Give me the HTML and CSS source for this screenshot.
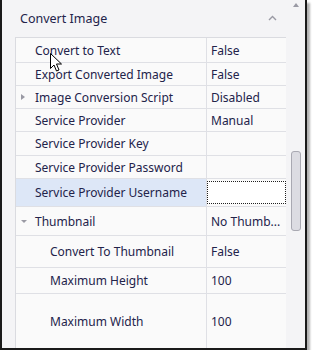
FILE: index.html
```html
<!DOCTYPE html>
<html lang="en">
<head>
    <meta charset="UTF-8">
    <title>Property Grid - Convert Image</title>
    <link rel="stylesheet" href="styles.css">
</head>
<body>
    <div class="window">
        <div class="content">
            <div class="group-header">
                <span class="group-title">Convert Image</span>
                <svg class="collapse" width="9" height="6" viewBox="0 0 9 6"><path d="M1 5 L4.5 1.5 L8 5" fill="none" stroke="#9a9aa4" stroke-width="1.4"/></svg>
            </div>

            <div class="grid">
                <div class="row" style="height: 25px">
                    <div class="name">Convert to Text</div>
                    <div class="value">False</div>
                </div>
                <div class="row" style="height: 23px">
                    <div class="name">Export Converted Image</div>
                    <div class="value">False</div>
                </div>
                <div class="row" style="height: 23px">
                    <div class="name"><span class="expander right"></span>Image Conversion Script</div>
                    <div class="value">Disabled</div>
                </div>
                <div class="row" style="height: 23px">
                    <div class="name">Service Provider</div>
                    <div class="value">Manual</div>
                </div>
                <div class="row" style="height: 24px">
                    <div class="name">Service Provider Key</div>
                    <div class="value"></div>
                </div>
                <div class="row" style="height: 23px">
                    <div class="name">Service Provider Password</div>
                    <div class="value"></div>
                </div>
                <div class="row selected" style="height: 28px">
                    <div class="name">Service Provider Username</div>
                    <div class="value"><span class="editor"></span></div>
                </div>
                <div class="row" style="height: 29px">
                    <div class="name"><span class="expander down"></span>Thumbnail</div>
                    <div class="value">No Thumb...</div>
                </div>
                <div class="row child" style="height: 32px">
                    <div class="name">Convert To Thumbnail</div>
                    <div class="value">False</div>
                </div>
                <div class="row child" style="height: 26px">
                    <div class="name">Maximum Height</div>
                    <div class="value">100</div>
                </div>
                <div class="row child last" style="height: 54px">
                    <div class="name">Maximum Width</div>
                    <div class="value">100</div>
                </div>
            </div>
        </div>

        <div class="scrollbar">
            <span class="scroll-up"></span>
            <div class="thumb"></div>
        </div>

        <svg class="cursor" width="13" height="19" viewBox="0 0 13 19">
            <path d="M0.5 0.5 L0.5 15.5 L4 12 L6.5 18 L9 17 L6.5 11 L11.5 11 Z" fill="#fff" stroke="#000" stroke-width="1"/>
        </svg>
    </div>
</body>
</html>
```

FILE: styles.css
```css
body {
    margin: 0;
    background: #ffffff;
    font-family: 'Noto Sans', 'Open Sans', sans-serif;
    font-size: 12px;
    color: #23234a;
}

.window {
    position: relative;
    width: 303px;
    height: 348px;
    display: flex;
    background: #f4f4f6;
    border-left: 2px solid #1a1a1a;
    border-right: 2px solid #1a1a1a;
    border-bottom: 2px solid #1a1a1a;
    box-shadow: 3px 3px 2px rgba(0, 0, 0, 0.3);
    overflow: hidden;
}

.content {
    width: 284px;
    display: flex;
    flex-direction: column;
}

.group-header {
    height: 38px;
    display: flex;
    align-items: center;
    justify-content: space-between;
    padding: 0 9px 0 18px;
    box-sizing: border-box;
}

.group-title {
    font-size: 12.5px;
    margin-top: -1px;
}

.collapse {
    margin-top: -2px;
}

.grid {
    margin-left: 13px;
    background: #fafafa;
    border-left: 1px solid #dadbe0;
    border-top: 1px solid #dadbe0;
    flex: 1;
}

.row {
    display: flex;
    box-sizing: border-box;
    border-bottom: 1px solid #dfe0e5;
}

.row.last {
    border-bottom: none;
}

.name {
    position: relative;
    width: 191px;
    padding-left: 19px;
    box-sizing: border-box;
    display: flex;
    align-items: center;
    white-space: nowrap;
    overflow: hidden;
    border-right: 1px solid #dfe0e5;
}

.row.child .name {
    padding-left: 34px;
}

.row.selected .name {
    background: #dde7f7;
}

.value {
    flex: 1;
    display: flex;
    align-items: center;
    padding-left: 4px;
    white-space: nowrap;
}

.row.selected .value {
    padding: 2px 0 2px 0;
}

.editor {
    display: block;
    width: 100%;
    height: 100%;
    box-sizing: border-box;
    border: 1px dotted #202020;
    background: #ffffff;
}

.expander {
    position: absolute;
    left: 5px;
    width: 0;
    height: 0;
}

.expander.right {
    border-top: 3px solid transparent;
    border-bottom: 3px solid transparent;
    border-left: 4px solid #9a9aa4;
}

.expander.down {
    border-left: 3px solid transparent;
    border-right: 3px solid transparent;
    border-top: 3px solid #9a9aa4;
    margin-top: 1px;
}

.scrollbar {
    position: relative;
    width: 19px;
}

.scroll-up {
    position: absolute;
    left: 7px;
    top: 3px;
    width: 0;
    height: 0;
    border-left: 3px solid transparent;
    border-right: 3px solid transparent;
    border-bottom: 4px solid #9a9aa4;
}

.thumb {
    position: absolute;
    left: 5px;
    top: 151px;
    width: 10px;
    height: 80px;
    box-sizing: border-box;
    border: 1px solid #a9a9b2;
    border-radius: 3px;
    background: #dcdce2;
}

.cursor {
    position: absolute;
    left: 48px;
    top: 53px;
}
```
